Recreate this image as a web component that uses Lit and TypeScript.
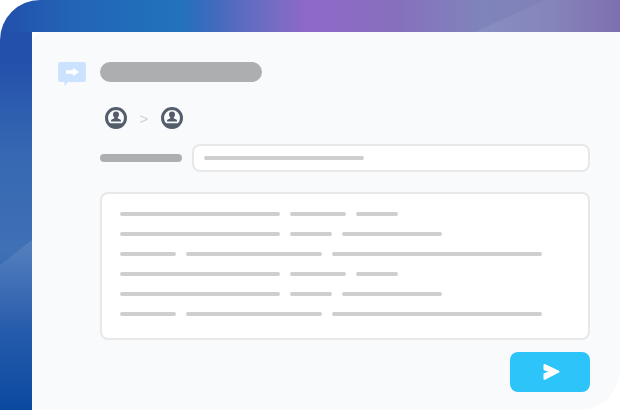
import { LitElement, css, html, svg } from "lit";
import { customElement } from "lit/decorators.js";

const ROWS = [
  [160, 56, 42],
  [160, 42, 100],
  [56, 136, 210],
  [160, 56, 42],
  [160, 42, 100],
  [56, 136, 210],
];

const person = svg`
  <circle cx="11" cy="11" r="9.5" fill="#f8fafc" stroke="#535d6c" stroke-width="3"/>
  <path d="M11 4.500c-1.900 0-3 1.300-3 3 0 1.200.5 2.200 1.200 2.800v1.300c-1.200.5-2.900.8-3.200 1.900v.9h10v-.9c-.3-1.100-2-1.400-3.200-1.900v-1.300c.7-.6 1.200-1.600 1.200-2.800 0-1.700-1.100-3-3-3z" fill="#535d6c"/>
  <path d="M3 16.200h16V18a11 11 0 0 1-16 0z" fill="#535d6c"/>
`;

@customElement("app-root")
export class AppRoot extends LitElement {
  render() {
    return html`
      <div class="frame">
        <svg class="swoosh" width="620" height="410" viewBox="0 0 620 410">
          <defs>
            <linearGradient id="fade-left" x1="0" y1="240" x2="0" y2="330" gradientUnits="userSpaceOnUse">
              <stop offset="0" stop-color="#fff" stop-opacity=".1"/>
              <stop offset="1" stop-color="#fff" stop-opacity="0"/>
            </linearGradient>
            <linearGradient id="fade-top" x1="475" y1="0" x2="620" y2="0" gradientUnits="userSpaceOnUse">
              <stop offset="0" stop-color="#fff" stop-opacity=".08"/>
              <stop offset="1" stop-color="#fff" stop-opacity="0"/>
            </linearGradient>
          </defs>
          <path d="M0 265 32 240V330H0z" fill="url(#fade-left)"/>
          <path d="M475 32 545 0H620V32z" fill="url(#fade-top)"/>
        </svg>
        <main class="panel">
          <svg class="chat" width="28" height="24" viewBox="0 0 28 24">
            <path d="M3 0h22a3 3 0 0 1 3 3v14a3 3 0 0 1-3 3H10L6.500 24v-4H3a3 3 0 0 1-3-3V3a3 3 0 0 1 3-3z" fill="#cbe3ff"/>
            <path d="M8 8.300h7V5.800l6 4.200-6 4.200v-2.500H8z" fill="#fff"/>
          </svg>
          <div class="content">
            <div class="title"></div>
            <div class="people">
              <svg width="22" height="22" viewBox="0 0 22 22">${person}</svg>
              <span class="chevron">&gt;</span>
              <svg width="22" height="22" viewBox="0 0 22 22">${person}</svg>
            </div>
            <div class="field">
              <div class="label"></div>
              <div class="input"><div class="line" style="width:160px"></div></div>
            </div>
            <div class="box">
              ${ROWS.map(
                (row) => html`
                  <div class="row">
                    ${row.map((w) => html`<div class="line" style="width:${w}px"></div>`)}
                  </div>
                `
              )}
            </div>
            <div class="actions">
              <button class="send" aria-label="send">
                <svg width="20" height="20" viewBox="0 0 20 20">
                  <path d="M4.500 3 18.500 9.600 4.500 16.800V12.200L11.500 9.700 4.500 7.200z" fill="#fff" stroke="#fff" stroke-width="2" stroke-linejoin="round"/>
                </svg>
              </button>
            </div>
          </div>
        </main>
      </div>
    `;
  }

  static styles = css`
    :host {
      display: block;
      width: 620px;
      height: 410px;
      background: #fff;
      overflow: hidden;
    }

    .frame {
      position: relative;
      box-sizing: border-box;
      width: 620px;
      height: 410px;
      padding: 32px 0 0 32px;
      border-top-left-radius: 40px;
      border-bottom-right-radius: 40px;
      overflow: hidden;
      background:
        linear-gradient(
            90deg,
            #2350ab 0,
            #2264b6 70px,
            #2272bc 180px,
            #3f6abd 212px,
            #5e6bc1 245px,
            #7a6cc4 280px,
            #9068c9 310px,
            #8670bd 400px,
            #7f84bb 480px,
            #8080b8 550px,
            #7f6fb0 620px
          )
          top left / 100% 32px no-repeat,
        linear-gradient(180deg, #2350ab 0, #2350ab 60px, #3468b2 150px, #4070b6 250px, #2a5ead 320px, #0a49a0 410px) top left /
          32px 100% no-repeat;
    }

    .swoosh {
      position: absolute;
      top: 0;
      left: 0;
    }

    .panel {
      position: relative;
      display: flex;
      box-sizing: border-box;
      width: 588px;
      height: 378px;
      padding: 30px 30px 0 26px;
      gap: 14px;
      background: #f8fafc;
      border-top-left-radius: 12px;
      border-bottom-right-radius: 40px;
    }

    .chat {
      flex: none;
    }

    .content {
      flex: 1;
      display: flex;
      flex-direction: column;
    }

    .title {
      width: 162px;
      height: 20px;
      border-radius: 10px;
      background: #adaeb0;
    }

    .people {
      display: flex;
      align-items: center;
      height: 22px;
      margin: 25px 0 0 5px;
    }

    .chevron {
      width: 34px;
      text-align: center;
      font: 15px "Liberation Sans", sans-serif;
      color: #cfd1d4;
    }

    .field {
      display: flex;
      align-items: center;
      gap: 10px;
      margin-top: 15px;
    }

    .label {
      width: 82px;
      height: 8px;
      border-radius: 4px;
      background: #adaeb0;
    }

    .input {
      flex: 1;
      display: flex;
      align-items: center;
      box-sizing: border-box;
      height: 28px;
      padding: 0 10px;
      background: #fff;
      border: 2px solid #e8e8e8;
      border-radius: 8px;
    }

    .box {
      display: flex;
      flex-direction: column;
      gap: 16px;
      box-sizing: border-box;
      height: 148px;
      margin-top: 20px;
      padding: 18px;
      background: #fff;
      border: 2px solid #e8e8e8;
      border-radius: 8px;
    }

    .row {
      display: flex;
      gap: 10px;
    }

    .line {
      height: 4px;
      border-radius: 2px;
      background: #cfcfcf;
    }

    .actions {
      display: flex;
      justify-content: flex-end;
      margin-top: 12px;
    }

    .send {
      display: flex;
      align-items: center;
      justify-content: center;
      width: 80px;
      height: 40px;
      padding: 0;
      border: none;
      border-radius: 8px;
      background: #2dc5f9;
    }
  `;
}

declare global {
  interface HTMLElementTagNameMap {
    "app-root": AppRoot;
  }
}
